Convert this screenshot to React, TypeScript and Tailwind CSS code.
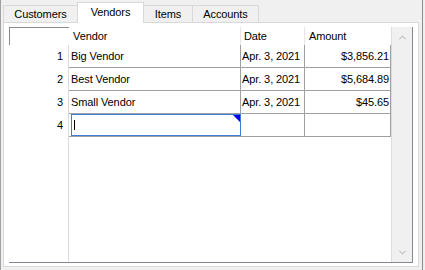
import { ChevronUp, ChevronDown } from "lucide-react";

const rows = [
  { n: 1, vendor: "Big Vendor", date: "Apr. 3, 2021", amount: "$3,856.21" },
  { n: 2, vendor: "Best Vendor", date: "Apr. 3, 2021", amount: "$5,684.89" },
  { n: 3, vendor: "Small Vendor", date: "Apr. 3, 2021", amount: "$45.65" },
];

const tabs = [
  { label: "Customers", w: "w-[74px] border-l" },
  { label: "Vendors", w: "w-[67px]", active: true },
  { label: "Items", w: "w-[49px] border-r" },
  { label: "Accounts", w: "w-[66px] border-r" },
];

const App = () => {
  return (
    <div className="h-[270px] w-[425px] overflow-hidden bg-[#f0f0f0] font-['Liberation_Sans',Arial,sans-serif] text-[11px] tracking-[-0.1px] text-black">
      <div className="flex h-full w-[423px] flex-col border-x border-l-[#a0a0a0] border-r-[#8c8c8c]">
        {/* tab strip */}
        <div className="flex h-[22px] items-end pl-[2px]">
          {tabs.map((t) =>
            t.active ? (
              <div
                key={t.label}
                className={`relative z-10 mb-[-1px] flex h-[21px] items-center justify-center border-x border-t border-[#d9d9d9] bg-white pb-[2px] ${t.w}`}
              >
                {t.label}
              </div>
            ) : (
              <div
                key={t.label}
                className={`flex h-[17px] items-center justify-center border-t border-[#d9d9d9] bg-[#f0f0f0] ${t.w}`}
              >
                {t.label}
              </div>
            )
          )}
        </div>

        {/* tab panel */}
        <div className="ml-[2px] flex h-[245px] w-[416px] border border-[#d9d9d9] bg-white px-[5px] pt-[4px] pb-[3px]">
          <div className="flex flex-1 border-r border-b border-[#828790]">
            {/* table */}
            <div className="flex w-[382px] flex-col">
              <div className="flex h-[18px]">
                <div className="w-[60px] border-t border-l border-[#8a8a8a]" />
                <div className="flex w-[172px] items-center border-r border-[#e5e5e5] pl-[4px]">Vendor</div>
                <div className="flex w-[64px] items-center border-r border-[#e5e5e5] pl-[3px]">Date</div>
                <div className="flex flex-1 items-center pl-[4px]">Amount</div>
              </div>
              <div className="flex flex-1">
                <div className="flex w-[60px] flex-col border-r border-[#dadada]">
                  {[1, 2, 3, 4].map((n) => (
                    <div key={n} className="flex h-[23px] items-center justify-end pr-[5px]">
                      {n}
                    </div>
                  ))}
                </div>
                <div className="flex flex-1 flex-col">
                  {rows.map((r) => (
                    <div key={r.n} className="flex h-[23px] border-b border-[#a0a0a0]">
                      <div className="flex w-[172px] items-center border-r border-[#a0a0a0] pl-[2px]">{r.vendor}</div>
                      <div className="flex w-[64px] items-center border-r border-[#a0a0a0] pl-[1px] whitespace-nowrap">{r.date}</div>
                      <div className="flex flex-1 items-center justify-end border-r border-[#a0a0a0] pr-[1px]">{r.amount}</div>
                    </div>
                  ))}
                  <div className="flex h-[23px] border-b border-[#a0a0a0]">
                    <div className="relative w-[172px] border-r border-[#a0a0a0]">
                      {/* active cell editor */}
                      <div className="absolute top-0 right-[-1px] bottom-0 left-[2px] border border-[#3c7fd0] bg-white">
                        <div className="absolute top-[5px] left-[2px] h-[10px] w-[1px] bg-black" />
                        <svg className="absolute top-0 right-0" width="7" height="7" viewBox="0 0 7 7">
                          <polygon points="0,0 7,0 7,7" fill="#0000ff" />
                        </svg>
                      </div>
                    </div>
                    <div className="w-[64px] border-r border-[#a0a0a0]" />
                    <div className="flex-1 border-r border-[#a0a0a0]" />
                  </div>
                </div>
              </div>
            </div>

            {/* vertical scrollbar */}
            <div className="flex w-[21px] flex-col items-center justify-between border-l border-[#dcdcdc] bg-[#f0f0f0] pt-[5px] pb-[4px]">
              <ChevronUp size={11} strokeWidth={2.5} className="text-[#c2c2c2]" />
              <ChevronDown size={11} strokeWidth={2.5} className="text-[#c2c2c2]" />
            </div>
          </div>
        </div>
      </div>
    </div>
  );
};

export default App;
